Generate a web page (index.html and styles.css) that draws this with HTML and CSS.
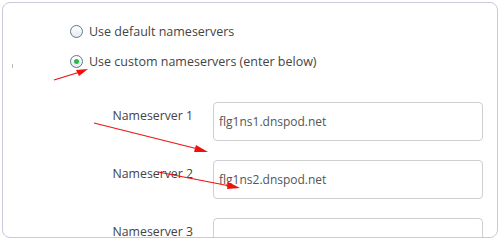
FILE: index.html
```html
<!DOCTYPE html>
<html lang="en">
<head>
    <meta charset="UTF-8">
    <title>Nameservers</title>
    <link rel="stylesheet" href="styles.css">
</head>
<body>
    <div class="panel">
        <span class="tick"></span>
        <div class="opciones">
            <label class="opcion"><input type="radio" name="ns"> Use default nameservers</label>
            <label class="opcion"><input type="radio" name="ns" checked> Use custom nameservers (enter below)</label>
        </div>
        <div class="campos">
            <label class="etiqueta" for="ns1">Nameserver 1</label>
            <input class="caja" id="ns1" type="text" value="flg1ns1.dnspod.net">
            <label class="etiqueta" for="ns2">Nameserver 2</label>
            <input class="caja" id="ns2" type="text" value="flg1ns2.dnspod.net">
            <label class="etiqueta" for="ns3">Nameserver 3</label>
            <input class="caja" id="ns3" type="text" value="">
        </div>
    </div>

    <svg class="flechas" width="500" height="240" viewBox="0 0 500 240">
        <g stroke="#f01010" stroke-width="1.2" fill="#f01010">
            <line x1="54" y1="80" x2="80" y2="72"/>
            <polygon points="88,69 76,70 79,76" stroke="none"/>
            <line x1="94" y1="123" x2="198" y2="149"/>
            <polygon points="208,152 196,145 194,152" stroke="none"/>
            <line x1="158" y1="172" x2="230" y2="186"/>
            <polygon points="240,188 228,182 227,189" stroke="none"/>
        </g>
    </svg>
</body>
</html>
```
FILE: styles.css
```css
* {
    margin: 0;
    box-sizing: border-box;
}

body {
    background-color: white;
    font-family: "Open Sans", "DejaVu Sans", sans-serif;
    font-size: 12.5px;
    color: #444;
}

.panel {
    position: relative;
    margin: 2px;
    width: 496px;
    height: 236px;
    border: 1px solid #cbc7dc;
    border-radius: 8px;
    overflow: hidden;
    padding: 19px 0 0 0;
}

.tick {
    position: absolute;
    left: 9px;
    top: 61px;
    width: 1px;
    height: 4px;
    background-color: #bbb;
}

.opciones {
    display: flex;
    flex-direction: column;
    gap: 12px;
    padding-left: 67px;
}

.opcion {
    display: flex;
    align-items: center;
    gap: 6px;
    height: 18px;
}

.opcion input {
    appearance: none;
    width: 13px;
    height: 13px;
    border: 1px solid #5a7894;
    border-radius: 50%;
    background: linear-gradient(#ffffff, #e6e9ee);
    display: grid;
    place-content: center;
}

.opcion input:checked::before {
    content: "";
    width: 5px;
    height: 5px;
    border-radius: 50%;
    background-color: #2fb54a;
}

.campos {
    display: grid;
    grid-template-columns: 190px 270px;
    column-gap: 20px;
    row-gap: 19px;
    margin-top: 32px;
}

.etiqueta {
    text-align: right;
    padding-top: 5px;
    font-size: 12.3px;
    color: #444;
}

.caja {
    height: 39px;
    border: 1px solid #cfcfcf;
    border-radius: 4px;
    padding: 0 5px;
    font-family: inherit;
    font-size: 12px;
    color: #555;
    outline: none;
}

.flechas {
    position: absolute;
    left: 0;
    top: 0;
}
```
